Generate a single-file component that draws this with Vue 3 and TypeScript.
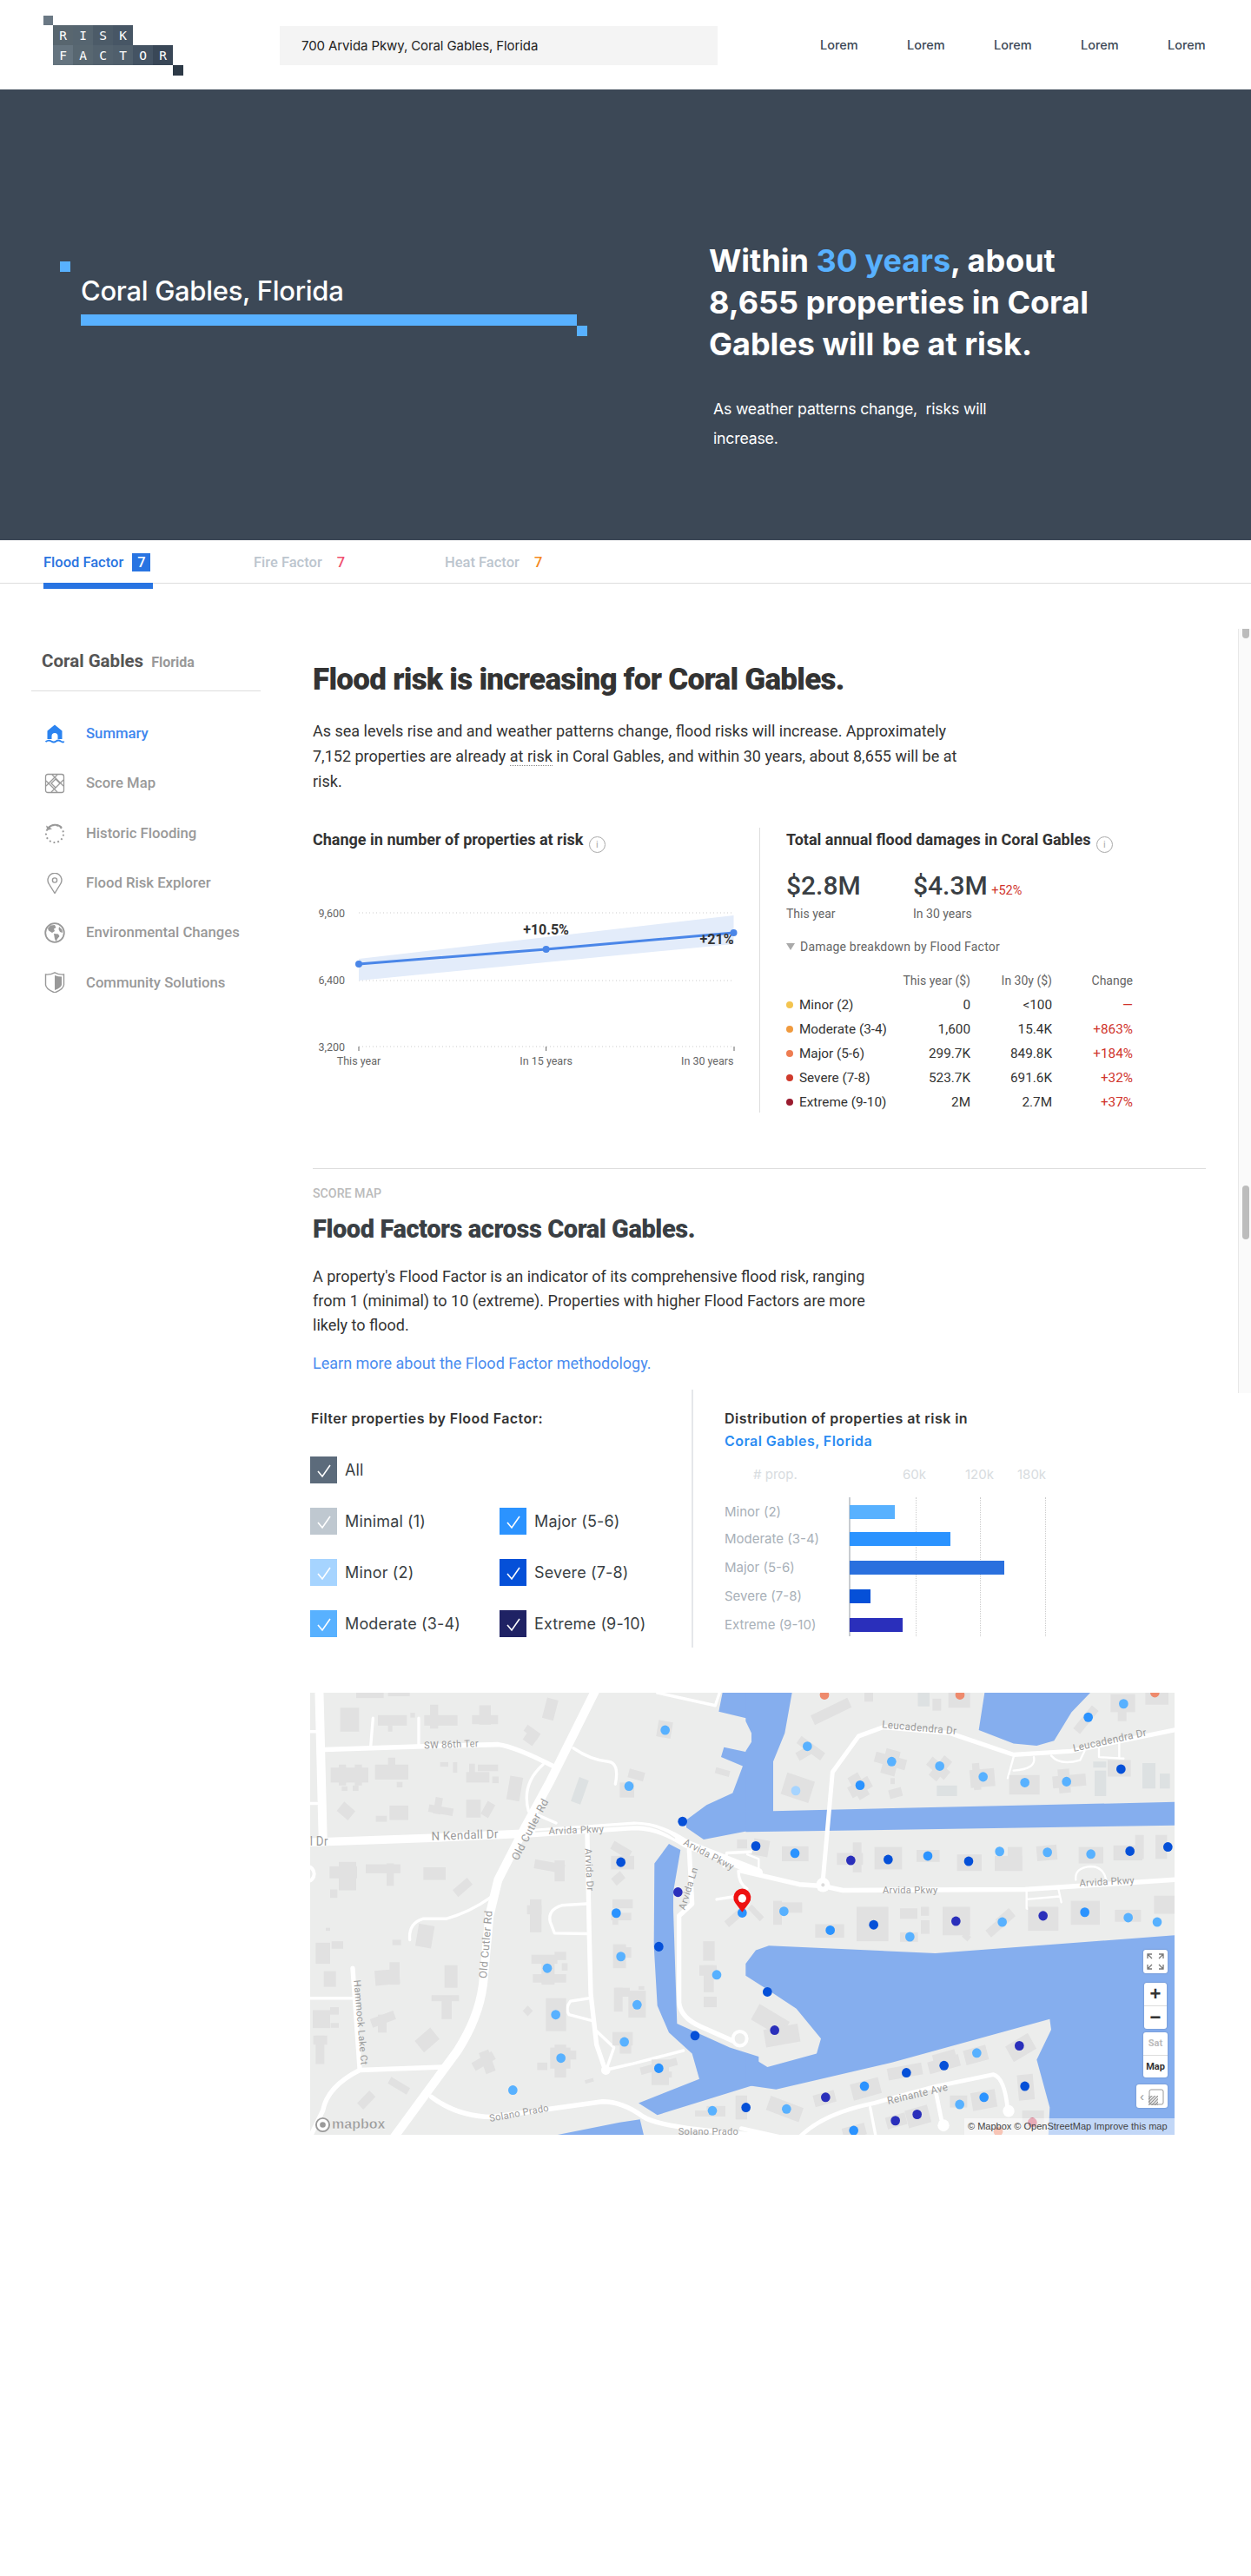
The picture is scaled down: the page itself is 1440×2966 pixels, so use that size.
<script setup lang="ts">
type B = number[];
type Dot = [number, number, string];
type Lbl = [string, number, number, number, number];

const MIN = '#a6d4ff', MOD = '#58b1ff', MAJ = '#2b93ff', SEV = '#0550d8', EXT = '#2a2fbb', ORG = '#ee8a6d';

const logoCells = [
  { t: '', c: 1, r: 1, bg: '#6a7884' },
  { t: 'R', c: 2, r: 2, bg: '#58666f' }, { t: 'I', c: 3, r: 2, bg: '#566570' }, { t: 'S', c: 4, r: 2, bg: '#4c5b68' }, { t: 'K', c: 5, r: 2, bg: '#475665' },
  { t: 'F', c: 2, r: 3, bg: '#65747f' }, { t: 'A', c: 3, r: 3, bg: '#586771' }, { t: 'C', c: 4, r: 3, bg: '#53626e' }, { t: 'T', c: 5, r: 3, bg: '#505f6c' }, { t: 'O', c: 6, r: 3, bg: '#445363' }, { t: 'R', c: 7, r: 3, bg: '#394757' },
  { t: '', c: 8, r: 4, bg: '#2d3a47' },
];

const nav = ['Summary', 'Score Map', 'Historic Flooding', 'Flood Risk Explorer', 'Environmental Changes', 'Community Solutions'];

const damage = [
  { n: 'Minor (2)', c: '#f3c44f', a: '0', b: '<100', d: '—' },
  { n: 'Moderate (3-4)', c: '#f09a3e', a: '1,600', b: '15.4K', d: '+863%' },
  { n: 'Major (5-6)', c: '#ee7d52', a: '299.7K', b: '849.8K', d: '+184%' },
  { n: 'Severe (7-8)', c: '#cf3a2c', a: '523.7K', b: '691.6K', d: '+32%' },
  { n: 'Extreme (9-10)', c: '#9a1b2e', a: '2M', b: '2.7M', d: '+37%' },
];

const checks = [
  { n: 'Minimal (1)', c: '#bfc8d0' }, { n: 'Major (5-6)', c: '#2b93ff' },
  { n: 'Minor (2)', c: '#a6d4ff' }, { n: 'Severe (7-8)', c: '#0550d8' },
  { n: 'Moderate (3-4)', c: '#58b1ff' }, { n: 'Extreme (9-10)', c: '#1f2264' },
];

const bars = [
  { n: 'Minor (2)', w: 52, c: '#58b1ff' }, { n: 'Moderate (3-4)', w: 116, c: '#2b93ff' }, { n: 'Major (5-6)', w: 178, c: '#2a70de' },
  { n: 'Severe (7-8)', w: 24, c: '#0550d8' }, { n: 'Extreme (9-10)', w: 61, c: '#2a2fbb' },
];

const buildA: B[] = [
  [155,105,65,80],[285,130,100,35],[320,165,15,20],[397,122,16,16],[445,130,115,35],[465,95,28,80],[610,130,90,30],[635,97,40,65],[860,75,40,70,15],[790,175,55,25,35],[790,195,40,30,35],
  [122,305,130,50],[150,295,25,70],[205,295,25,70],[275,295,115,50],[320,272,25,30],[160,368,20,15],[198,365,20,18],[350,353,20,18],[500,287,28,15],[544,287,15,35],[590,320,80,35],[600,292,20,30],[630,295,70,22],[680,335,22,22],[735,335,45,80,10],[150,430,50,40,40],[325,432,65,48],[278,466,38,20],[460,435,85,25,10],[480,405,25,55,10],[590,412,50,60],[640,430,50,30,-60],
  [118,635,95,40],[150,620,60,95],[243,628,120,30],[315,625,25,75],[120,712,25,28],[442,638,77,42],[545,690,65,30,-40],[825,620,105,30,10],[895,615,35,70],[800,765,50,30],[810,745,40,110],[1090,565,70,30,30],[1090,600,80,45],[1095,660,40,30,-40],[1095,745,70,30],[1090,790,70,25],[1095,815,20,15],
  [420,830,55,75,10],[335,880,30,18],[105,840,15,10],[70,890,50,70],[125,885,40,25],[98,985,42,52],[275,980,85,50,-5],[325,955,35,75],[515,965,45,75],[470,1065,95,20],[505,1070,35,75],[260,1130,85,30,-20],[285,1130,30,60],[420,1190,70,50,-40],[60,1115,60,60],[120,1105,30,25],[122,1158,28,16],[62,1200,48,30],[70,1200,30,95],[320,1355,75,25,30],[215,1400,60,30,-45],[610,1270,80,30,-30],[645,1250,35,75,-20],
  [815,930,90,30],[895,920,40,28],[920,958,20,25],[820,995,115,28],[850,960,45,70],[1097,895,45,80],[1100,905,60,35],[1105,1040,50,30],[1100,1040,30,80],[1150,1050,60,90],[1185,1035,20,12],[865,1075,70,110],[790,1105,25,25,45],[880,1240,70,70],[880,1250,90,30],[895,1230,40,110],[835,1290,35,25],[1095,1188,70,45],[1120,1230,40,30],[1190,1290,130,25,-15],[1230,1280,60,85],[1280,1320,20,20],[1000,1345,30,12,-15],
  [1395,965,60,35],[1410,965,35,90],[1410,1070,45,35],[1408,885,40,65],[1450,310,50,20,15],[1250,150,50,55,10],[1150,315,55,30,15],[1120,355,50,50],[1480,790,80,25,-40],[1525,545,35,30],[1380,1450,105,20],[1420,1435,65,35],[1520,1400,40,80],[210,55,95,18],[320,55,75,12],
];

const buildB: B[] = [
  [220,100,140,35,-25],[405,55,30,30],[590,55,40,45],[640,75,30,40],[695,55,75,50],[1255,60,85,60],[1280,100,30,50],[1375,55,80,40],[1120,130,100,30,-50],
  [170,225,100,30,35],[170,240,60,30,-30],[125,335,100,75,18],[440,265,110,35,15],[470,245,50,85,15],[495,340,15,20],[490,375,45,30,-15],[620,290,80,35,40],[650,265,35,85,40],[770,310,85,60,-5],[780,290,25,90,-5],[350,350,80,40,-30],[365,325,40,85,-30],
  [905,330,105,65],[1055,330,115,40,-5],[1075,310,40,80,-5],[1245,280,80,55],
  [20,545,55,55,10],[120,568,92,50],[310,590,90,40],[365,555,30,100],[440,570,95,75],[585,580,80,40],[725,595,85,55],[855,600,95,50],[900,570,50,80],[1000,565,70,50,-5],[1145,570,85,55],[1265,565,100,50],[1340,530,30,80],[1410,530,40,80],
  [90,750,30,80],[90,755,100,35],[235,828,100,45],[378,770,110,115],[528,775,60,35],[600,770,28,30],[600,815,30,45],[528,855,62,32],[675,770,95,95],[745,860,25,20,40],[820,810,110,30,-40],[860,790,60,30,-40],[970,770,105,80],[1118,750,100,80],[1270,780,90,40],[1405,733,71,60],[0,780,60,20,45],
  [20,1120,120,60,30],[60,1170,120,60,-10],[900,1210,90,60,-30],[750,1240,80,50,-15],[625,1275,110,40,-15],[640,1255,80,25,-15],[485,1300,120,40,-10],[360,1350,100,55,-15],[230,1390,75,40,-15],[70,1420,120,50,20],[700,1400,60,40],[775,1385,85,60,-10],[935,1330,55,85,-5],[480,1465,70,40,-15],[550,1440,80,60,-15],[330,1500,80,40,-15],[950,1450,75,60],
];

const paleB: B[] = [[655,365,70,35],[1195,285,45,20],[1200,315,40,85],[1365,290,45,85],[1425,325,35,50],[590,55,40,45]];

const dotsA: Dot[] = [
  [1277,180,MOD],[1152,367,MOD],[1337,485,SEV],[1124,621,SEV],[1321,721,EXT],[1108,791,MAJ],[1255,903,SEV],[1124,936,MOD],[870,975,MOD],[1455,997,MOD],[1180,1097,MOD],[899,1130,MOD],[1136,1221,MOD],[917,1275,MOD],[1380,1200,SEV],[1255,1309,MAJ],[751,1382,MOD],[1440,1451,MOD],[1556,1440,SEV],[1543,790,MAJ],
];

const dotsB: Dot[] = [
  [267,62,ORG],[735,62,ORG],[1408,55,ORG],[1300,92,MOD],[1178,137,MAJ],[208,234,MOD],[499,285,MOD],[665,300,MOD],[390,364,MAJ],[815,336,MOD],[959,355,MOD],[1103,352,MOD],[1291,310,SEV],[168,382,MIN],
  [30,567,SEV],[165,591,MAJ],[358,615,EXT],[487,612,SEV],[624,600,MAJ],[765,618,SEV],[872,585,MOD],[1037,588,MOD],[1187,594,MOD],[1322,584,SEV],[1453,570,SEV],
  [127,785,MOD],[287,848,MAJ],[437,830,SEV],[562,870,MOD],[721,818,EXT],[881,821,MOD],[1022,800,EXT],[1166,788,MAJ],[1316,806,MOD],[1416,821,MOD],
  [70,1054,SEV],[95,1182,EXT],[940,1234,EXT],[793,1258,MOD],[680,1300,SEV],[550,1324,SEV],[405,1369,MAJ],[271,1406,EXT],[136,1445,MOD],[959,1369,SEV],[818,1406,MAJ],[734,1430,MOD],[587,1463,EXT],[512,1484,EXT],[368,1517,MAJ],[985,1490,'#d0566e'],[867,1520,ORG],
];

const labelsA: Lbl[] = [
  ['SW 86th Ter',445,242,-2,33],['N Kendall Dr',470,548,-2,40],['l Dr',50,566,0,40],['Arvida Pkwy',875,528,-2,33],['Old Cutler Rd',768,618,-62,37],['Old Cutler Rd',660,1010,-85,37],
  ['Arvida Dr',1000,575,87,33],['Arvida Pkwy',1338,562,27,33],['Arvida Ln',1345,782,-72,33],['Hammock Lake Ct',202,1015,85,33],['Solano Prado',672,1488,-10,33],['Solano Prado',1322,1530,0,33],
];
const labelsB: Lbl[] = [
  ['Leucadendra Dr',465,172,5,35],['Leucadendra Dr',1128,252,-12,35],['Arvida Pkwy',468,726,0,33],['Arvida Pkwy',1148,702,-3,33],['Reinante Ave',487,1430,-13,35],
];

function rot(b: B): string | undefined {
  return b[4] ? `rotate(${b[4]} ${b[0] + b[2] / 2} ${b[1] + b[3] / 2})` : undefined;
}
function lblT(l: Lbl): string {
  return `rotate(${l[3]} ${l[1]} ${l[2]})`;
}
</script>

<template>
  <div class="page">
    <header class="top">
      <div class="logo">
        <span v-for="(c, i) in logoCells" :key="i" class="cell" :style="{ gridColumn: c.c, gridRow: c.r, background: c.bg }">{{ c.t }}</span>
      </div>
      <div class="search">700 Arvida Pkwy, Coral Gables, Florida</div>
      <nav class="topnav">
        <a v-for="n in 5" :key="n">Lorem</a>
      </nav>
    </header>

    <section class="hero">
      <div class="hero-left">
        <i class="sq sq-a"></i>
        <div class="place">Coral Gables, Florida</div>
        <div class="bar"></div>
        <i class="sq sq-b"></i>
      </div>
      <div class="hero-right">
        <h2>Within <span>30 years</span>, about 8,655 properties in Coral Gables will be at risk.</h2>
        <p>As weather patterns change,&nbsp; risks will increase.</p>
      </div>
    </section>

    <div class="tabs">
      <div class="tab active">Flood Factor <b class="badge">7</b></div>
      <div class="tab fire">Fire Factor <b>7</b></div>
      <div class="tab heat">Heat Factor <b>7</b></div>
    </div>

    <div class="content">
      <aside class="side">
        <div class="side-head"><strong>Coral Gables</strong><span>Florida</span></div>
        <ul>
          <li v-for="(n, i) in nav" :key="n" :class="{ on: i === 0 }">
            <svg viewBox="0 0 24 24" width="24" height="24" class="ic">
              <g v-if="i === 0">
                <path d="M12 1.500 20.500 8.500V18H15.500V14.500A3.500 3.500 0 0 0 8.500 14.500V18H3.500V8.500Z" fill="#2b83f0"/>
                <path d="M1.500 21Q5 18.500 8 20.500T13.500 20.500T19 20.500T22.500 20.500" fill="none" stroke="#2b83f0" stroke-width="1.800"/>
              </g>
              <g v-else-if="i === 1" fill="none" stroke="#999" stroke-width="1.300">
                <rect x="1.500" y="1.500" width="21" height="21" rx="2.500"/>
                <path d="M2 15 15 2M8 22 22 8M2 9 15 22M9 2 22 15M13 7 8 12 13 17 18 12Z"/>
              </g>
              <g v-else-if="i === 2" fill="none" stroke="#999" stroke-width="2">
                <path d="M4 7.500A10 10 0 0 1 20 6" />
                <path d="M2 3.500 3.500 9 9 7.500Z" fill="#999" stroke="none"/>
                <circle cx="12" cy="13" r="10" stroke-dasharray="1.800 3" stroke-dashoffset="-20" pathLength="62" />
              </g>
              <g v-else-if="i === 3" fill="none" stroke="#999" stroke-width="1.400">
                <path d="M12 23.500 5.200 12.500A8 8 0 1 1 18.800 12.500Z"/>
                <circle cx="12" cy="8.500" r="2.600"/>
              </g>
              <g v-else-if="i === 4">
                <circle cx="12" cy="12" r="10.800" fill="none" stroke="#999" stroke-width="1.800"/>
                <path d="M7 3.500 12 3 13.500 6 11 7.500 12 10 9 12 5 9.500 4 7ZM11 13 16 13.500 17.500 16 15 19 13.500 22 12 19 11.500 16ZM17 5 20.500 8.500 21 12 18 11 16.500 8Z" fill="#999"/>
              </g>
              <g v-else>
                <path d="M1.500 3Q7 3.500 12 .8 17 3.500 22.500 3V15Q22 20 12 24 2 20 1.500 15Z" fill="none" stroke="#999" stroke-width="1.400"/>
                <path d="M12 4Q16 5.500 20 5.500V15Q19 18.500 12 21Z" fill="#999"/>
              </g>
            </svg>
            <span>{{ n }}</span>
          </li>
        </ul>
      </aside>

      <main class="main">
        <h1>Flood risk is increasing for Coral Gables.</h1>
        <p class="lead">As sea levels rise and and weather patterns change, flood risks will increase. Approximately 7,152 properties are already <span class="dotted">at risk</span> in Coral Gables, and within 30 years, about 8,655 will be at risk.</p>

        <div class="stats">
          <div class="stat-l">
            <h3>Change in number of properties at risk <i class="info">i</i></h3>
            <svg class="chart" viewBox="360 981 514 260" width="514" height="260">
              <g stroke="#ccc" stroke-dasharray="1 3" stroke-width="1">
                <line x1="413" x2="845" y1="1050" y2="1050"/>
                <line x1="413" x2="845" y1="1128" y2="1128"/>
                <line x1="413" x2="845" y1="1204" y2="1204"/>
              </g>
              <polygon points="413,1103 844.500,1053 844.500,1086 413,1128" fill="#e3ecfa"/>
              <polyline points="413,1109 628.600,1092 844.500,1073" fill="none" stroke="#4a86e8" stroke-width="3"/>
              <g fill="#4a86e8"><circle cx="413" cy="1109" r="4"/><circle cx="628.600" cy="1092" r="4"/><circle cx="844.500" cy="1073" r="4"/></g>
              <g stroke="#666"><line x1="413" x2="413" y1="1204" y2="1209"/><line x1="628.600" x2="628.600" y1="1204" y2="1209"/><line x1="845" x2="845" y1="1204" y2="1209"/></g>
              <g class="ax" text-anchor="end"><text x="397" y="1055">9,600</text><text x="397" y="1132">6,400</text><text x="397" y="1209">3,200</text></g>
              <g class="ax"><text x="413" y="1225" text-anchor="middle">This year</text><text x="628.600" y="1225" text-anchor="middle">In 15 years</text><text x="844.500" y="1225" text-anchor="end">In 30 years</text></g>
              <text class="pct" x="628.600" y="1075" text-anchor="middle">+10.5%</text>
              <text class="pct" x="844.500" y="1086" text-anchor="end">+21%</text>
            </svg>
          </div>
          <div class="stat-r">
            <h3>Total annual flood damages in Coral Gables <i class="info">i</i></h3>
            <div class="money">
              <div class="m1"><div class="big">$2.8M</div><div class="cap">This year</div></div>
              <div><div class="big">$4.3M <small>+52%</small></div><div class="cap">In 30 years</div></div>
            </div>
            <div class="breakdown"><i class="tri"></i>Damage breakdown by Flood Factor</div>
            <div class="trow thead"><span></span><span></span><span>This year ($)</span><span>In 30y ($)</span><span>Change</span></div>
            <div v-for="d in damage" :key="d.n" class="trow">
              <span><i class="dot" :style="{ background: d.c }"></i></span><span>{{ d.n }}</span><span>{{ d.a }}</span><span>{{ d.b }}</span><span class="red">{{ d.d }}</span>
            </div>
          </div>
        </div>

        <div class="sec2">
          <div class="eyebrow">SCORE MAP</div>
          <h2 class="h2">Flood Factors across Coral Gables.</h2>
          <p class="body2">A property's Flood Factor is an indicator of its comprehensive flood risk, ranging from 1 (minimal) to 10 (extreme). Properties with higher Flood Factors are more likely to flood.</p>
          <a class="learn">Learn more about the Flood Factor methodology.</a>

          <div class="filters">
            <div class="f-left">
              <h4>Filter properties by Flood Factor:</h4>
              <div class="checks">
                <label class="chk wide">
                  <i class="box" style="background:#5c6b7b"><svg viewBox="0 0 24 24" width="24" height="24"><path d="M5 13 10 19 19 6" fill="none" stroke="#fff" stroke-width="1.600"/></svg></i>All
                </label>
                <label v-for="c in checks" :key="c.n" class="chk">
                  <i class="box" :style="{ background: c.c }"><svg viewBox="0 0 24 24" width="24" height="24"><path d="M5 13 10 19 19 6" fill="none" stroke="#fff" stroke-width="1.600"/></svg></i>{{ c.n }}
                </label>
              </div>
            </div>
            <div class="f-right">
              <h4>Distribution of properties at risk in<br><span>Coral Gables, Florida</span></h4>
              <div class="d-head"><span class="pr"># prop.</span><span class="k k1">60k</span><span class="k k2">120k</span><span class="k k3">180k</span></div>
              <div class="d-body">
                <i class="gl g1"></i><i class="gl g2"></i><i class="gl g3"></i>
                <div v-for="b in bars" :key="b.n" class="d-row">
                  <span class="d-n">{{ b.n }}</span>
                  <i class="d-b" :style="{ width: b.w + 'px', background: b.c }"></i>
                </div>
              </div>
            </div>
          </div>

          <div class="map">
            <svg viewBox="0 0 995 509" width="995" height="509" class="map-svg">
              <rect width="995" height="509" fill="#ecedec"/>
              <g transform="translate(-17,-19) scale(.33333,.34483)">
                <g fill="#85aeee">
                  <path d="M1475 55H1600V150L1462 118Z"/>
                  <path d="M1480 237 1600 262V510L1410 545 1350 505 1350 480 1420 430 1510 390 1545 300 1470 270Z"/>
                  <path d="M1290 560 1330 580 1305 720 1305 780 1318 1160 1500 1240 1600 1270V1360L1250 1465 1185 1425 1395 1345 1370 1260 1290 1190 1250 1100 1238 900 1240 625Z"/>
                  <path d="M860 1540 1120 1490 1190 1480 1205 1540Z"/>
                </g>
                <g fill="none" stroke="#fff" stroke-linecap="round" stroke-linejoin="round">
                  <g stroke-width="30"><path d="M82 40 95 540"/></g>
                  <g stroke-width="16">
                    <path d="M100 245 420 235 700 228Q760 235 900 305"/>
                    <path d="M1008 530 1015 870 1020 1060 1040 1230 1070 1315"/>
                    <path d="M198 975 222 1310"/>
                    <path d="M470 1405Q560 1470 680 1472L1060 1420Q1130 1420 1200 1470 1260 1510 1600 1532"/>
                    <path d="M1360 580 1370 760 1325 800 1325 1090Q1330 1140 1400 1170L1540 1230"/>
                    <path d="M510 1305 222 1315Q110 1370 95 1450L50 1540"/>
                  </g>
                  <path stroke-width="30" d="M1040 40 880 350 790 510 700 680 670 800 650 1010Q640 1130 560 1250L340 1540"/>
                  <path stroke-width="28" d="M40 555 470 540 800 525 1170 500Q1260 500 1350 560L1600 655"/>
                  <path stroke="#ecedec" stroke-width="4" d="M830 519 1180 497Q1250 500 1310 540"/>
                  <g stroke-width="10">
                    <path d="M960 240Q1020 280 1080 285 1120 290 1105 360"/>
                    <path d="M855 295Q780 360 805 450L900 490"/>
                    <path d="M1005 760 920 765Q870 780 880 820L895 858 1010 860"/>
                    <path d="M680 735Q600 790 520 810L440 810Q390 825 395 880"/>
                    <path d="M1015 1075 950 1085Q930 1110 945 1130L1025 1150"/>
                    <path d="M1070 1315 1160 1295 1340 1250"/>
                    <path d="M1040 1185 1100 1240 1075 1310"/>
                    <path d="M40 1075H205M40 185H70M40 425H75"/>
                    <path d="M268 140 260 235M426 140V230"/>
                    <path d="M1250 55 1450 98 1465 55"/>
                    <path d="M1480 635 1490 590 1600 585"/>
                    <path d="M1455 745 1520 735M1530 650Q1530 690 1560 710"/>
                  </g>
                  <circle cx="40" cy="660" r="25" fill="#ecedec" stroke-width="12"/>
                  <circle cx="1535" cy="1210" r="24" fill="#ecedec" stroke-width="12"/>
                  <circle cx="1072" cy="1315" r="16" fill="#fff" stroke="none"/>
                </g>
                <rect x="965" y="340" width="35" height="85" transform="rotate(20 982 382)" fill="#dde1e2"/>
                <g fill="#e1e1e1"><rect v-for="(b, i) in buildA" :key="i" :x="b[0]" :y="b[1]" :width="b[2]" :height="b[3]" :transform="rot(b)"/></g>
                <g class="road-lbl"><text v-for="(l, i) in labelsA" :key="i" :x="l[1]" :y="l[2]" :font-size="l[4]" :transform="lblT(l)">{{ l[0] }}</text></g>
                <circle v-for="(d, i) in dotsA" :key="i" :cx="d[0]" :cy="d[1]" r="16" :fill="d[2]"/>
              </g>
              <g transform="translate(503,-19) scale(.33333,.34483)">
                <g fill="#85aeee">
                  <path d="M-5 55H155L130 190 90 285 90 450 1476 420V498L0 520H-5V250L15 220 15 190-5 150Z"/>
                  <path d="M820 55H1185L1120 120 1060 215 1000 232 920 225 800 180Z"/>
                  <path d="M75 900 650 925 1476 865V1540H1040L1045 1440 1000 1280 1050 1180 1045 1145 500 1290 100 1380-5 1365-5 1260 70 1305 240 1260 255 1210 170 1110 60 1040-5 1000-5 960 30 915Z"/>
                </g>
                <g fill="none" stroke="#fff" stroke-linecap="round" stroke-linejoin="round">
                  <path stroke-width="16" d="M-20 650 180 695 260 700 330 715 960 712 1500 678"/>
                  <path stroke-width="15" d="M260 700 295 320 385 200 470 170 700 190 920 262 1120 250 1500 175"/>
                  <path stroke-width="14" d="M180 1540Q260 1460 440 1425L650 1370 850 1330Q890 1340 900 1450"/>
                  <path stroke-width="14" d="M650 1380 675 1500M-20 1510 120 1540"/>
                  <path stroke-width="10" d="M425 1440 445 1540"/>
                  <g stroke-width="7">
                    <path d="M0 595 40 610 40 655"/>
                    <path d="M920 270 900 340M990 270Q1000 310 920 315"/>
                    <path d="M1050 265Q1080 300 1150 280L1165 250"/>
                    <path d="M1215 235 1215 270 1300 275M1285 225V275"/>
                    <path d="M1135 680Q1130 640 1185 635 1230 635 1240 680"/>
                    <path d="M965 715V775L980 780M965 745 1080 735M1075 710 1085 755"/>
                  </g>
                  <circle cx="903" cy="1452" r="20" fill="#fff" stroke="none"/>
                  <circle cx="678" cy="1500" r="20" fill="#fff" stroke="none"/>
                  <circle cx="262" cy="697" r="24" fill="#fff" stroke="none"/>
                  <circle cx="262" cy="697" r="6" fill="#dcdcdc" stroke="none"/>
                </g>
                <g fill="#e1e1e1"><rect v-for="(b, i) in buildB" :key="i" :x="b[0]" :y="b[1]" :width="b[2]" :height="b[3]" :transform="rot(b)"/></g>
                <g fill="#dde1e2"><rect v-for="(b, i) in paleB" :key="i" :x="b[0]" :y="b[1]" :width="b[2]" :height="b[3]"/></g>
                <g class="road-lbl"><text v-for="(l, i) in labelsB" :key="i" :x="l[1]" :y="l[2]" :font-size="l[4]" :transform="lblT(l)">{{ l[0] }}</text></g>
                <circle v-for="(d, i) in dotsB" :key="i" :cx="d[0]" :cy="d[1]" r="16" :fill="d[2]"/>
              </g>
              <g transform="translate(-17,-19) scale(.33333,.34483)">
                <path d="M1543 788 1519 757A30 30 0 1 1 1567 757Z" fill="#ee1111"/>
                <circle cx="1543" cy="742" r="14" fill="#fff"/>
              </g>
            </svg>
            <div class="mlogo">
              <svg viewBox="0 0 20 20" width="19" height="19"><circle cx="10" cy="10" r="8" fill="#fff" stroke="#9a9a9a" stroke-width="2"/><circle cx="10" cy="10" r="3.500" fill="#9a9a9a"/></svg>
              <span>mapbox</span>
            </div>
            <div class="ctrl c-full">
              <svg viewBox="0 0 28 27" width="28" height="27" fill="none" stroke="#777" stroke-width="1.300"><path d="M5 10V5H10M5 5 10 10M18 5H23V10M23 5 18 10M5 17V22H10M5 22 10 17M18 22H23V17M23 22 18 17"/></svg>
            </div>
            <div class="ctrl c-zoom"><span>+</span><span>−</span></div>
            <div class="ctrl c-layer"><span class="sat">Sat</span><span>Map</span></div>
            <div class="ctrl c-style">
              <span class="chev">‹</span>
              <svg viewBox="0 0 20 20" width="20" height="20"><defs><pattern id="hatch" width="2.500" height="2.500" patternUnits="userSpaceOnUse" patternTransform="rotate(45)"><rect width="1.200" height="2.500" fill="#8a8a8a"/></pattern></defs><rect x="3" y="2" width="16" height="17" rx="2" fill="none" stroke="#999"/><rect x="2" y="9" width="11" height="11" fill="url(#hatch)"/></svg>
            </div>
            <div class="attrib">© Mapbox © OpenStreetMap Improve this map</div>
          </div>
        </div>
      </main>
    </div>

    <div class="scroll"><i class="t1"></i><i class="t2"></i></div>
  </div>
</template>

<style>
html, body { margin: 0; background: #fff; }
</style>

<style scoped>
.page { position: relative; min-height: 2966px; width: 1440px; overflow: hidden; background: #fff; font-family: Roboto, "Liberation Sans", sans-serif; color: #333; }
.top { height: 103px; display: flex; align-items: flex-start; font-family: Inter, "Liberation Sans", sans-serif; }
.logo { margin: 18px 0 0 50px; display: grid; grid-template-columns: 11px repeat(6, 23px) 12px; grid-template-rows: 11px 23px 23px 12px; width: 161px; flex: none; }
.cell { display: flex; align-items: center; justify-content: center; color: #fff; font: 400 14.500px "DejaVu Sans Mono", monospace; }
.search { margin: 30px 0 0 111px; width: 479px; height: 45px; padding-left: 25px; background: #f4f4f4; font-size: 15px; line-height: 45px; color: #222; letter-spacing: -.1px; flex: none; }
.topnav { margin: 41px 0 0 118px; display: flex; gap: 56px; font-size: 14.500px; line-height: 22px; font-weight: 500; color: #3c4856; }
.topnav a { width: 44px; }

.hero { height: 519px; background: #3c4856; display: flex; color: #fff; font-family: Inter, "Liberation Sans", sans-serif; }
.hero-left { width: 816px; padding: 198px 0 0 69px; box-sizing: border-box; }
.sq { display: block; width: 12px; height: 12px; background: #58b1ff; }
.place { margin: 1px 0 0 24px; font-size: 31px; line-height: 42px; letter-spacing: -.3px; font-weight: 500; }
.bar { margin: 6px 0 0 24px; width: 571px; height: 13px; background: #58b1ff; }
.sq-b { margin-left: 595px; }
.hero-right { width: 460px; padding-top: 173px; }
.hero-right h2 { margin: 0; font-size: 36px; line-height: 48px; font-weight: 700; letter-spacing: 0; }
.hero-right h2 span { color: #58b1ff; }
.hero-right p { margin: 34px 0 0 5px; width: 345px; font-size: 17.700px; line-height: 33.500px; font-weight: 400; letter-spacing: -.2px; }

.tabs { height: 49px; border-bottom: 1px solid #ddd; position: relative; display: flex; font-weight: 500; font-size: 16.500px; line-height: 51px; }
.tab { white-space: nowrap; }
.tab.active { margin-left: 50px; width: 242px; color: #2a74e0; position: relative; }
.tab.active::after { content: ""; position: absolute; left: 0; top: 49px; width: 126px; height: 7px; background: #2874e2; }
.badge { display: inline-block; margin-left: 6px; width: 21px; height: 21px; background: #2874e2; color: #fff; font-weight: 500; text-align: center; line-height: 21px; }
.tab.fire { width: 220px; color: #bcc5ce; }
.tab.fire b { margin-left: 13px; color: #f0506e; font-weight: 500; }
.tab.heat { color: #bcc5ce; }
.tab.heat b { margin-left: 13px; color: #f5891e; font-weight: 500; }

.content { display: flex; }
.side { width: 360px; flex: none; padding: 75px 0 0 36px; box-sizing: border-box; }
.side-head { width: 264px; height: 49px; border-bottom: 1px solid #ddd; padding-left: 12px; box-sizing: border-box; line-height: 28px; }
.side-head strong { font-size: 20.500px; font-weight: 700; color: #555; }
.side-head span { margin-left: 9px; font-size: 16px; font-weight: 700; color: #999; }
.side ul { list-style: none; margin: 20px 0 0; padding: 0 0 0 15px; }
.side li { height: 57.300px; display: flex; align-items: center; color: #999; font-weight: 500; font-size: 16.700px; }
.side li.on { color: #3e86ee; }
.ic { flex: none; margin-right: 24px; }

.main { width: 1028px; padding-top: 89px; }
h1 { margin: 0; font-size: 35px; line-height: 44px; font-weight: 900; color: #333; letter-spacing: -.72px; white-space: nowrap; }
.lead { margin: 22px 0 0; width: 750px; font-size: 18px; line-height: 29px; color: #333; }
.dotted { border-bottom: 1px dotted #888; }
.stats { margin-top: 39px; height: 328px; display: flex; }
.stat-l { width: 514px; flex: none; }
.stat-r { border-left: 1px solid #ddd; padding-left: 30px; flex: 1; }
h3 { margin: 0; font-size: 18px; line-height: 28px; font-weight: 700; color: #333; white-space: nowrap; }
.info { display: inline-block; vertical-align: -3px; width: 17px; height: 17px; border: 1px solid #aaa; border-radius: 50%; text-align: center; font: 400 11px/17px Roboto, sans-serif; color: #aaa; margin-left: 2px; }
.chart { display: block; }
.ax { font-size: 12.500px; fill: #666; }
.pct { font-size: 16px; font-weight: 700; fill: #333; }
.money { display: flex; margin-top: 18px; }
.m1 { width: 146px; }
.big { height: 40px; font-size: 30px; line-height: 40px; font-weight: 500; color: #3a3f44; white-space: nowrap; }
.big small { font-size: 14.500px; line-height: 0; font-weight: 400; color: #d0342c; margin-left: -3px; }
.cap { margin-top: 2px; font-size: 14px; line-height: 20px; color: #666; }
.breakdown { margin-top: 18px; font-size: 14px; line-height: 20px; color: #666; letter-spacing: .2px; display: flex; align-items: center; }
.tri { width: 0; height: 0; border-left: 5px solid transparent; border-right: 5px solid transparent; border-top: 8px solid #aaa; margin-right: 6px; }
.trow { display: grid; grid-template-columns: 15px 110px 87px 94px 93px; height: 28px; line-height: 28px; font-size: 15.300px; color: #333; white-space: nowrap; }
.trow span:nth-child(n+3) { text-align: right; }
.thead { margin-top: 15px; font-size: 14px; color: #666; }
.dot { display: inline-block; width: 8px; height: 8px; border-radius: 50%; vertical-align: 1px; }
.red { color: #d0342c; }

.sec2 { margin-top: 64px; border-top: 1px solid #ddd; padding-top: 18px; }
.eyebrow { font-size: 14.200px; line-height: 20px; font-weight: 500; color: #bbb; }
.h2 { margin: 13px 0 0; font-size: 29px; line-height: 36px; font-weight: 900; color: #3a3f44; letter-spacing: -.42px; }
.body2 { margin: 23px 0 0; width: 650px; font-size: 18px; line-height: 28px; color: #333; }
.learn { display: block; margin-top: 16px; font-size: 18px; line-height: 28px; color: #4a8cef; }
.filters { margin: 16px 0 0 -3px; height: 297px; display: flex; font-family: Inter, "Liberation Sans", sans-serif; }
.f-left { width: 439px; flex: none; padding-top: 22px; box-sizing: border-box; }
h4 { margin: 0; font-size: 16px; line-height: 22px; font-weight: 600; letter-spacing: .45px; color: #333; padding-left: 1px; white-space: nowrap; }
.checks { margin-top: 33px; display: grid; grid-template-columns: 218px 218px; grid-auto-rows: 31px; row-gap: 28px; }
.chk { display: flex; align-items: center; font-size: 18px; letter-spacing: .15px; color: #3a3f44; white-space: nowrap; }
.wide { grid-column: span 2; }
.box { width: 31px; height: 31px; margin-right: 9px; display: flex; align-items: center; justify-content: center; flex: none; }
.f-right { border-left: 2px solid #e5e7ea; padding: 20px 0 0 36px; flex: 1; }
.f-right h4 { line-height: 26px; padding: 0; }
.f-right h4 span { color: #2b8cf2; }
.d-head { position: relative; margin-top: 14px; height: 24px; line-height: 24px; font-size: 15px; color: #d8dce0; }
.pr { position: absolute; left: 33px; }
.k { position: absolute; }
.k1 { left: 205px; } .k2 { left: 277px; } .k3 { left: 337px; }
.d-body { position: relative; margin-top: 14px; height: 160px; }
.d-body::before { content: ""; position: absolute; left: 143px; top: 0; bottom: 0; width: 1.500px; background: #c8ccd0; }
.gl { position: absolute; top: 0; bottom: 0; border-left: 1px dotted #ccc; }
.g1 { left: 220px; } .g2 { left: 294px; } .g3 { left: 369px; }
.d-row { position: relative; display: flex; align-items: center; height: 33px; font-size: 15px; color: #a8b0b8; }
.d-row:first-of-type { margin-bottom: -2px; }
.d-n { width: 144px; flex: none; }
.d-b { display: block; height: 16px; }

.map { position: relative; margin: 52px 0 0 -3px; width: 995px; height: 509px; overflow: hidden; }
.map-svg { display: block; }
.road-lbl text { fill: #9b9b9b; font-family: Roboto, sans-serif; letter-spacing: 1px; }
.mlogo { position: absolute; left: 5px; bottom: 2px; display: flex; align-items: center; gap: 1px; font: 700 16px/20px "Liberation Sans", sans-serif; color: #9a9a9a; -webkit-text-stroke: .3px #fff; }
.ctrl { position: absolute; right: 8px; background: #fff; border-radius: 3px; box-shadow: 0 0 2px rgba(0,0,0,.25); display: flex; flex-direction: column; align-items: center; }
.c-full { top: 296px; width: 28px; height: 27px; }
.c-zoom { top: 334px; width: 26px; height: 53px; right: 9px; font: 700 22px/26px "Liberation Sans", sans-serif; color: #333; }
.c-zoom span { height: 26px; width: 100%; text-align: center; }
.c-zoom span:first-child { border-bottom: 1px solid #ddd; }
.c-layer { top: 391px; width: 28px; height: 52px; font: 700 11px/25.500px Roboto, sans-serif; color: #333; }
.c-layer span { height: 25.500px; width: 100%; text-align: center; }
.sat { color: #bbb; border-bottom: 1px solid #ddd; }
.c-style { top: 451px; width: 36px; height: 27px; flex-direction: row; justify-content: center; gap: 3px; }
.chev { font: 400 15px/27px "Liberation Sans", sans-serif; color: #999; }
.attrib { position: absolute; right: 0; bottom: 0; width: 242px; height: 19px; box-sizing: border-box; padding-left: 4px; background: rgba(255,255,255,.5); font: 400 11px/19px "Liberation Sans", sans-serif; color: #444; white-space: nowrap; }

.scroll { position: absolute; left: 1425px; top: 724px; width: 14px; height: 880px; background: #fafafa; border-left: 1px solid #e8e8e8; }
.t1, .t2 { position: absolute; left: 4px; width: 8px; background: #bcbcbc; }
.t1 { top: 0; height: 11px; border-radius: 0 0 4px 4px; }
.t2 { top: 641px; height: 62px; border-radius: 4px; }
</style>
